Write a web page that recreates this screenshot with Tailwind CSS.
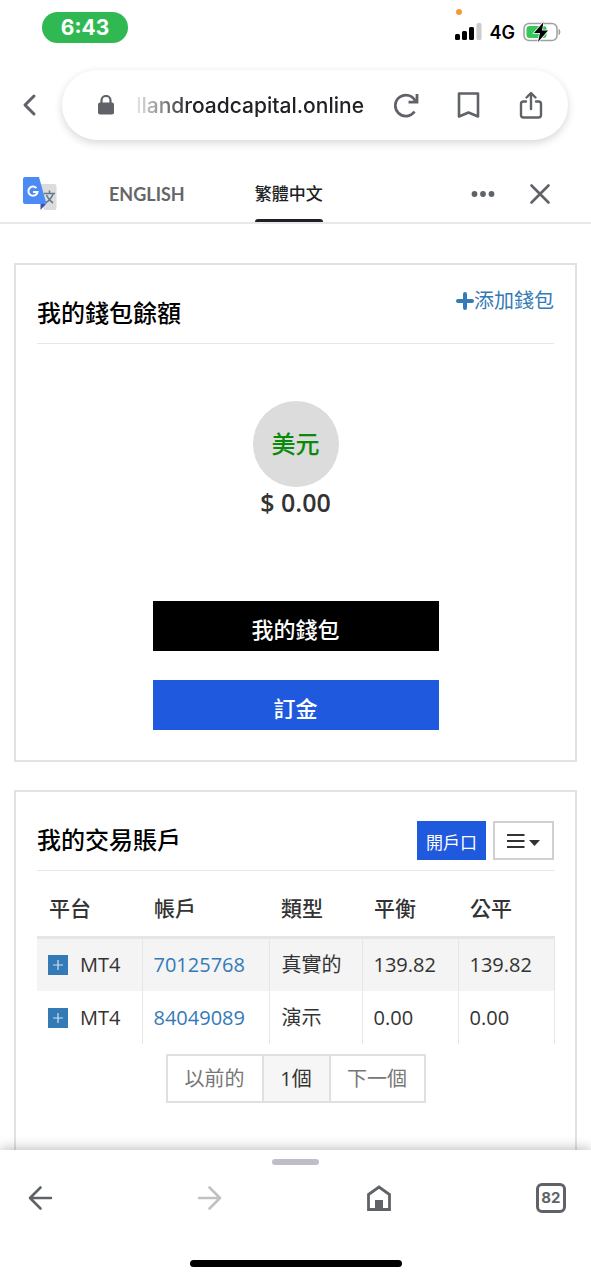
<!DOCTYPE html>
<html lang="zh-Hant">
<head>
<meta charset="utf-8">
<meta name="viewport" content="width=device-width, initial-scale=1">
<title>我的錢包</title>
<script src="https://cdn.jsdelivr.net/npm/@tailwindcss/browser@4"></script>
</head>
<body class="flex h-screen flex-col bg-white font-['Open_Sans','Noto_Sans_CJK_TC',sans-serif] text-[#333]">

<header class="shrink-0 font-['Inter','Noto_Sans_CJK_TC',sans-serif]">
  <!-- Status bar -->
  <div class="flex h-[70px] items-start justify-between pt-3 pr-[30px] pl-[42px]">
    <div class="flex h-[31px] w-[86px] items-center justify-center rounded-full bg-[#30b953] text-[21px] font-bold text-white">6:43</div>
    <div class="relative flex h-10 items-center gap-2 text-black">
      <span class="absolute -top-[3px] left-px size-[6px] rounded-full bg-[#f59b35]"></span>
      <svg class="h-[18px] w-[27px]" viewBox="0 0 27 18" aria-hidden="true">
        <rect x="0" y="11" width="5" height="6" rx="1.5"/>
        <rect x="7" y="8" width="5" height="9" rx="1.5"/>
        <rect x="14" y="4" width="5" height="13" rx="1.5"/>
        <rect x="21.500" y="0" width="5" height="17" rx="1.5" fill="#ccc"/>
      </svg>
      <span class="text-[18px] font-semibold">4G</span>
      <svg class="h-5 w-[38px]" viewBox="0 0 38 20" aria-hidden="true">
        <rect x="1" y="1.500" width="33" height="17" rx="5" fill="#fff" stroke="#a0a0a0" stroke-width="1.500"/>
        <rect x="3.500" y="4" width="20" height="12" rx="3" fill="#35c759"/>
        <path d="M36 7.500q2 2.500 0 5z" fill="#a0a0a0" stroke="#a0a0a0"/>
        <path d="M20.500 0 11 11h6l-2 9L25 8.500h-6z" fill="#000" stroke="#fff" stroke-width="1.500" paint-order="stroke"/>
      </svg>
    </div>
  </div>

  <!-- Address bar -->
  <div class="flex items-center gap-[22px] pr-[23px] pl-5">
    <button class="flex h-[70px] w-5 items-center justify-center text-[#5f6368]" aria-label="返回">
      <svg class="h-6 w-4" viewBox="0 0 16 24" fill="none" stroke="currentColor" stroke-width="3" stroke-linecap="round" stroke-linejoin="round"><path d="M12 3 3 12l9 9"/></svg>
    </button>
    <div class="flex h-[70px] min-w-0 flex-1 items-center rounded-full bg-white pr-6 pl-9 text-[#5f6368] shadow-[0_3px_9px_rgba(0,0,0,0.16)]">
      <svg class="h-5 w-4 shrink-0" viewBox="0 0 16 20" aria-hidden="true"><rect x="0" y="7.500" width="16" height="12" rx="2" fill="currentColor"/><path d="M3.500 8.500V5.500a4.500 4.500 0 0 1 9 0v3" fill="none" stroke="currentColor" stroke-width="2.200"/></svg>
      <input class="ml-4 w-0 min-w-0 flex-1 bg-transparent pt-px text-right text-[21px] font-medium text-[#202124] outline-none [mask-image:linear-gradient(to_right,transparent,black_60px)]" type="text" value="llandroadcapital.online" aria-label="網址" readonly>
      <div class="ml-[30px] flex shrink-0 items-center gap-9">
        <button aria-label="重新載入"><svg class="size-[26px]" viewBox="0 0 26 26" fill="none" stroke="currentColor" stroke-width="2.800"><path d="M20.500 19.500a10.500 10.500 0 1 1 1-10"/><path d="M23 2V10.200H14.500"/></svg></button>
        <button aria-label="書籤"><svg class="h-7 w-[26px]" viewBox="0 0 26 28" fill="none" stroke="currentColor" stroke-width="2.600" stroke-linejoin="round"><path d="M3 2.500h19v23L12.500 21.500 3 25.500z"/></svg></button>
        <button aria-label="分享"><svg class="h-7 w-[26px]" viewBox="0 0 26 28" fill="none" stroke="currentColor" stroke-width="2.400" stroke-linecap="round" stroke-linejoin="round"><path d="M8 10.500H5.500A2.500 2.500 0 0 0 3 13V24a2.500 2.500 0 0 0 2.500 2.500h15A2.500 2.500 0 0 0 23 24V13A2.500 2.500 0 0 0 20.500 10.500H18M13 18V2.500M8.500 6.500 13 2l4.500 4.500"/></svg></button>
      </div>
    </div>
  </div>

  <!-- Translation bar -->
  <div class="flex h-[84px] items-stretch border-b-2 border-[#e8e8ea] pr-10 pl-[23px]">
    <svg class="mt-[37px] h-[34px] w-[34px] shrink-0" viewBox="0 0 34 34" aria-hidden="true">
      <path d="M14 7h17.500a2 2 0 0 1 2 2v22a2 2 0 0 1-2 2H21z" fill="#dcdcdc"/>
      <path d="M21 16.500h11M26.500 13.500v3M30 17q-2 6-8 9M23.500 18q2 5 6.500 8" fill="none" stroke="#607d8b" stroke-width="1.600"/>
      <path d="M17.500 27H23l-5.500 6z" fill="#3a4fb5"/>
      <path d="M2 0h14l7.500 27H2a2 2 0 0 1-2-2V2a2 2 0 0 1 2-2z" fill="#4c8bf5"/>
      <path d="M13.300 11A4.600 4.600 0 1 0 14.500 15H10" fill="none" stroke="#fff" stroke-width="2"/>
    </svg>
    <div class="ml-[52px] flex gap-[70px]" role="tablist">
      <button role="tab" aria-selected="false" class="pt-[26px] font-['Lato',sans-serif] text-[18px] font-bold text-[#666]">ENGLISH</button>
      <button role="tab" aria-selected="true" class="relative pt-7 text-[17px] font-medium text-[#202124]">繁體中文<span class="absolute inset-x-0 bottom-0 h-[3px] rounded-t bg-[#202124]"></span></button>
    </div>
    <button class="ml-auto pt-[26px] text-[#5f6368]" aria-label="更多選項"><svg class="h-6 w-6" viewBox="0 0 24 24" fill="currentColor"><circle cx="3.500" cy="12" r="2.900"/><circle cx="12" cy="12" r="2.900"/><circle cx="20.500" cy="12" r="2.900"/></svg></button>
    <button class="ml-[34px] pt-[26px] text-[#5f6368]" aria-label="關閉"><svg class="h-[22px] w-[22px]" viewBox="0 0 22 22" fill="none" stroke="currentColor" stroke-width="2.600" stroke-linecap="round"><path d="m2.500 2.500 17 17M19.500 2.500l-17 17"/></svg></button>
  </div>
</header>

<main class="flex min-h-0 flex-1 flex-col gap-7 overflow-hidden px-[14px] pt-[39px]">
  <!-- Wallet balance -->
  <section class="shrink-0 border-2 border-[#e2e2e2] px-[21px] pb-[30px]">
    <div class="flex h-[79px] items-start justify-between border-b border-[#e6e6e6]">
      <h2 class="pt-8 text-[24px] leading-8 font-medium text-black">我的錢包餘額</h2>
      <a href="#" class="flex items-center pt-5 text-[20px] leading-8 text-[#337ab7]"><svg class="h-[18px] w-[18px]" viewBox="0 0 18 18" fill="none" stroke="currentColor" stroke-width="4" stroke-linecap="round" aria-hidden="true"><path d="M9 2v14M2 9h14"/></svg>添加錢包</a>
    </div>
    <div class="mt-[57px] flex flex-col items-center">
      <div class="flex size-[86px] items-center justify-center rounded-full bg-[#dcdcdc] text-[24px] font-medium text-[#0a8a0a]">美元</div>
      <p class="text-[25px] leading-[30px] font-semibold">$ 0.00</p>
    </div>
    <div class="mt-[84px] flex flex-col items-center gap-[29px] text-[22px] font-medium text-white">
      <button class="h-[50px] w-[286px] bg-black pt-[6px]">我的錢包</button>
      <button class="h-[50px] w-[286px] bg-[#1e59de] pt-[6px]">訂金</button>
    </div>
  </section>

  <!-- Trading accounts -->
  <section class="shrink-0 border-2 border-[#e2e2e2] px-[21px] pb-20">
    <div class="flex h-[79px] items-start justify-between border-b border-[#e6e6e6]">
      <h2 class="pt-8 text-[24px] leading-8 font-medium text-black">我的交易賬戶</h2>
      <div class="flex gap-[7px] pt-[29px]">
        <button class="h-[39px] w-[69px] bg-[#1e59de] pt-1 text-[17px] text-white">開戶口</button>
        <button class="flex h-[39px] w-[61px] items-center justify-center gap-1 border-2 border-[#d0d0d0] text-[#333]" aria-label="選單">
          <svg class="h-4 w-[18px]" viewBox="0 0 18 16" fill="none" stroke="currentColor" stroke-width="2" aria-hidden="true"><path d="M0 2h17.500M0 8h17.500M0 14h17.500"/></svg>
          <svg class="mt-1 h-[6px] w-[11px]" viewBox="0 0 11 6" fill="currentColor" aria-hidden="true"><path d="M0 0h11L5.500 6z"/></svg>
        </button>
      </div>
    </div>
    <table class="w-full table-fixed border-collapse text-left text-[20px] leading-8">
      <colgroup><col class="w-[105px]"><col class="w-[127px]"><col class="w-[93px]"><col class="w-[96px]"><col class="w-[96px]"></colgroup>
      <thead>
        <tr class="h-[66px] border-b-3 border-[#e4e5e8] text-[21px]">
          <th class="pt-[10px] pl-3 font-medium">平台</th><th class="pt-[10px] pl-3 font-medium">帳戶</th><th class="pt-[10px] pl-3 font-medium">類型</th><th class="pt-[10px] pl-3 font-medium">平衡</th><th class="pt-[10px] pl-3 font-medium">公平</th>
        </tr>
      </thead>
      <tbody>
        <tr class="h-[54px] bg-[#f4f4f4]">
          <td class="border-r border-[#e6e6e6] pl-[11px]"><div class="flex items-center gap-3"><button class="flex size-5 items-center justify-center bg-[#337ab7]" aria-label="展開"><svg class="size-[10px]" viewBox="0 0 10 10" stroke="#cfe0f0" stroke-width="1.200"><path d="M5 0v10M0 5h10"/></svg></button>MT4</div></td>
          <td class="border-r border-[#e6e6e6] pl-[11px]"><a href="#" class="text-[#337ab7]">70125768</a></td>
          <td class="border-r border-[#e6e6e6] pl-3">真實的</td>
          <td class="border-r border-[#e6e6e6] pl-[11px]">139.82</td>
          <td class="border-r border-[#e6e6e6] pl-[11px]">139.82</td>
        </tr>
        <tr class="h-[53px]">
          <td class="border-r border-[#e6e6e6] pl-[11px]"><div class="flex items-center gap-3"><button class="flex size-5 items-center justify-center bg-[#337ab7]" aria-label="展開"><svg class="size-[10px]" viewBox="0 0 10 10" stroke="#cfe0f0" stroke-width="1.200"><path d="M5 0v10M0 5h10"/></svg></button>MT4</div></td>
          <td class="border-r border-[#e6e6e6] pl-[11px]"><a href="#" class="text-[#337ab7]">84049089</a></td>
          <td class="border-r border-[#e6e6e6] pl-3">演示</td>
          <td class="border-r border-[#e6e6e6] pl-[11px]">0.00</td>
          <td class="border-r border-[#e6e6e6] pl-[11px]">0.00</td>
        </tr>
      </tbody>
    </table>
    <nav class="mt-[10px] flex justify-center" aria-label="分頁">
      <div class="flex h-[49px] border-2 border-[#e0e0e0] text-[20px] text-[#777]">
        <button class="w-[94px]">以前的</button>
        <button class="w-[69px] border-x-2 border-[#e0e0e0] bg-[#f6f6f6] text-[#333]" aria-current="page">1個</button>
        <button class="w-[93px]">下一個</button>
      </div>
    </nav>
  </section>
</main>

<!-- Browser toolbar -->
<footer class="relative flex shrink-0 flex-col items-center bg-white pt-[9px] pb-[11px] font-['Inter',sans-serif] text-[#5f6368] shadow-[0_-1px_12px_rgba(0,0,0,0.28)]">
  <span class="h-[6px] w-[47px] rounded-full bg-[#bdbec8]"></span>
  <nav class="mt-[18px] flex w-full items-center justify-between pr-[25px] pl-7" aria-label="瀏覽器">
    <button aria-label="上一頁"><svg class="size-[26px]" viewBox="0 0 26 26" fill="none" stroke="currentColor" stroke-width="2.600" stroke-linecap="round" stroke-linejoin="round"><path d="M23 13H2M12.500 2.500 2 13l10.500 10.500"/></svg></button>
    <button class="text-[#bfc1c3]" aria-label="下一頁"><svg class="size-[26px]" viewBox="0 0 26 26" fill="none" stroke="currentColor" stroke-width="2.600" stroke-linecap="round" stroke-linejoin="round"><path d="M2 13h21M12.500 2.500 23 13 12.500 23.500"/></svg></button>
    <button aria-label="首頁"><svg class="size-[28px]" viewBox="0 0 28 28" fill="none" stroke="currentColor" stroke-width="2.800"><path d="M3.500 10.500 14 3l10.500 7.500V25.500h-21z"/><path d="M10 16h8v9h-8z" fill="currentColor" stroke="none"/></svg></button>
    <button class="flex size-[30px] items-center justify-center rounded-md border-[3px] border-[#5f6368] text-[15px] font-bold" aria-label="82 個分頁">82</button>
  </nav>
  <span class="mt-[47px] h-[7px] w-[212px] rounded-full bg-black"></span>
</footer>
</body>
</html>
